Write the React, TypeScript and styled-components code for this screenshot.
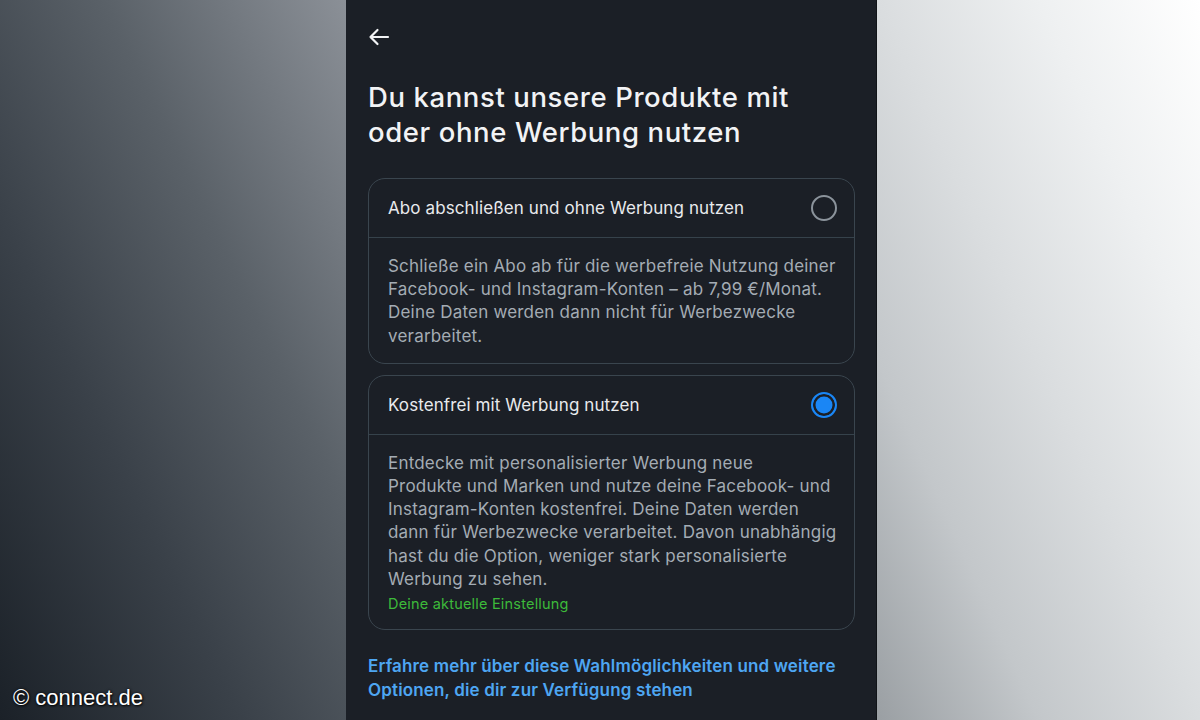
import React, { useState } from "react";
import styled, { createGlobalStyle } from "styled-components";

const GlobalStyle = createGlobalStyle`
  html, body {
    margin: 0;
    padding: 0;
    width: 100%;
    height: 100%;
    overflow: hidden;
  }
  #root {
    height: 100%;
  }
`;

type Choice = {
  id: string;
  title: string;
  text: string;
  current?: boolean;
};

// copy keeps the line breaks of the app's layout
const choices: Choice[] = [
  {
    id: "abo",
    title: "Abo abschließen und ohne Werbung nutzen",
    text: `Schließe ein Abo ab für die werbefreie Nutzung deiner
Facebook- und Instagram-Konten – ab 7,99 €/Monat.
Deine Daten werden dann nicht für Werbezwecke
verarbeitet.`,
  },
  {
    id: "free",
    title: "Kostenfrei mit Werbung nutzen",
    text: `Entdecke mit personalisierter Werbung neue
Produkte und Marken und nutze deine Facebook- und
Instagram-Konten kostenfrei. Deine Daten werden
dann für Werbezwecke verarbeitet. Davon unabhängig
hast du die Option, weniger stark personalisierte
Werbung zu sehen.`,
    current: true,
  },
];

const App = () => {
  const [selected, setSelected] = useState("free");

  return (
    <Page>
      <GlobalStyle />
      <Backdrop $side="left" />
      <Screen>
        <BackButton aria-label="Zurück">
          <svg width="22" height="18" viewBox="0 0 22 18" fill="none">
            <path
              d="M20 9H2.5M9.5 2L2.5 9l7 7"
              stroke="#f2f3f5"
              strokeWidth="2.2"
              strokeLinecap="round"
              strokeLinejoin="round"
            />
          </svg>
        </BackButton>
        <Title>Du kannst unsere Produkte mit oder ohne Werbung nutzen</Title>
        <Options>
          {choices.map((c) => (
            <Card key={c.id} onClick={() => setSelected(c.id)}>
              <CardHead>
                <CardTitle>{c.title}</CardTitle>
                <Radio $checked={selected === c.id} />
              </CardHead>
              <CardBody>
                <BodyText>{c.text}</BodyText>
                {c.current && <Current>Deine aktuelle Einstellung</Current>}
              </CardBody>
            </Card>
          ))}
        </Options>
        <MoreLink href="#">
          Erfahre mehr über diese Wahlmöglichkeiten und weitere Optionen, die
          dir zur Verfügung stehen
        </MoreLink>
      </Screen>
      <Backdrop $side="right" />
      <Watermark>© connect.de</Watermark>
    </Page>
  );
};

export default App;

const Page = styled.div`
  position: relative;
  display: flex;
  width: 100%;
  height: 100vh;
  overflow: hidden;
`;

const Backdrop = styled.div<{ $side: "left" | "right" }>`
  flex: ${(p) => (p.$side === "left" ? "0 0 346px" : "1 1 auto")};
  background: ${(p) =>
    p.$side === "left"
      ? "linear-gradient(to bottom left, #8b9097 0%, #5a6168 35%, #3a4149 65%, #1b2128 100%)"
      : "linear-gradient(to bottom left, #ffffff 0%, #eef0f1 25%, #dadddf 50%, #c3c7ca 75%, #9a9fa3 100%)"};
`;

const Screen = styled.div`
  flex: 0 0 531px;
  box-sizing: border-box;
  padding: 22px 21px 0 22px;
  background: #1b1f26;
  border-right: 1px solid #111418;
  font-family: Inter, "Noto Sans", sans-serif;
  display: flex;
  flex-direction: column;
`;

const BackButton = styled.button`
  align-self: flex-start;
  display: flex;
  align-items: center;
  padding: 6px 0;
  background: none;
  border: none;
  cursor: pointer;
`;

const Title = styled.h1`
  margin: 28px 0 0;
  width: 460px;
  font-size: 27.5px;
  font-weight: 500;
  line-height: 35px;
  letter-spacing: 0.6px;
  color: #f2f3f5;
`;

const Options = styled.div`
  margin-top: 28px;
  display: flex;
  flex-direction: column;
  gap: 11px;
`;

const Card = styled.div`
  border: 1.5px solid #3a454e;
  border-radius: 17px;
  cursor: pointer;
`;

const CardHead = styled.div`
  display: flex;
  align-items: center;
  justify-content: space-between;
  height: 58px;
  padding: 0 17px 0 19px;
  border-bottom: 1.5px solid #36424b;
`;

const CardTitle = styled.span`
  font-size: 17px;
  font-weight: 400;
  letter-spacing: 0.1px;
  color: #e8eaed;
`;

const Radio = styled.span<{ $checked: boolean }>`
  box-sizing: border-box;
  width: 26px;
  height: 26px;
  border-radius: 50%;
  border: 2.5px solid ${(p) => (p.$checked ? "#1a86f5" : "#8b939b")};
  background: ${(p) => (p.$checked ? "#1a86f5" : "transparent")};
  box-shadow: ${(p) => (p.$checked ? "inset 0 0 0 2.5px #1b1f26" : "none")};
`;

const CardBody = styled.div`
  padding: 17px 12px 15px 19px;
`;

const BodyText = styled.p`
  margin: 0;
  font-size: 17px;
  line-height: 23.2px;
  letter-spacing: 0.2px;
  white-space: pre-line;
  color: #a4acb4;
`;

const Current = styled.div`
  margin-top: 3px;
  font-size: 14.5px;
  line-height: 20px;
  letter-spacing: 0.2px;
  color: #3dba3a;
`;

const MoreLink = styled.a`
  display: block;
  margin-top: 24px;
  font-size: 17px;
  font-weight: 600;
  line-height: 24px;
  letter-spacing: 0.15px;
  color: #4ea6f2;
  text-decoration: none;
`;

const Watermark = styled.div`
  position: absolute;
  left: 13px;
  bottom: 9px;
  font-family: "Liberation Sans", Arial, sans-serif;
  font-size: 22px;
  color: #ffffff;
  text-shadow: 0 0 3px rgba(0, 0, 0, 0.9), 1px 1px 2px rgba(0, 0, 0, 0.8);
`;
